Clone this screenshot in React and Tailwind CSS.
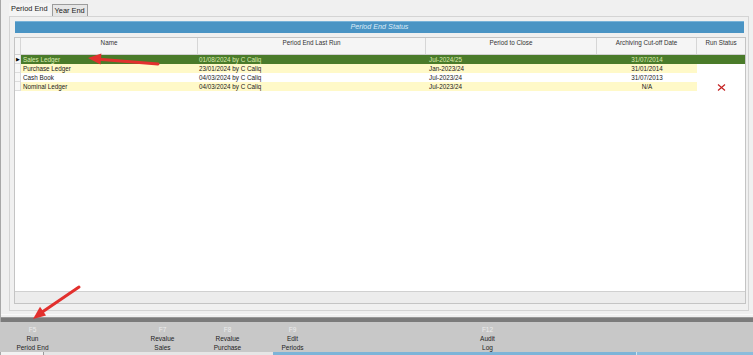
import React from 'react';

const columns = [
  { key: 'ind', label: '' },
  { key: 'name', label: 'Name' },
  { key: 'lastRun', label: 'Period End Last Run' },
  { key: 'toClose', label: 'Period to Close' },
  { key: 'cutoff', label: 'Archiving Cut-off Date' },
  { key: 'status', label: 'Run Status' },
];

const rows = [
  { name: 'Sales Ledger', lastRun: '01/08/2024 by C Caliq', toClose: 'Jul-2024/25', cutoff: '31/07/2014', selected: true },
  { name: 'Purchase Ledger', lastRun: '23/01/2024 by C Caliq', toClose: 'Jan-2023/24', cutoff: '31/01/2014', shaded: true },
  { name: 'Cash Book', lastRun: '04/03/2024 by C Caliq', toClose: 'Jul-2023/24', cutoff: '31/07/2013' },
  { name: 'Nominal Ledger', lastRun: '04/03/2024 by C Caliq', toClose: 'Jul-2023/24', cutoff: 'N/A', shaded: true, failed: true },
];

// function keys, 65px each, empty slots keep the spacing
const keys = [
  { k: 'F5', l1: 'Run', l2: 'Period End' },
  null,
  { k: 'F7', l1: 'Revalue', l2: 'Sales' },
  { k: 'F8', l1: 'Revalue', l2: 'Purchase' },
  { k: 'F9', l1: 'Edit', l2: 'Periods' },
  null,
  null,
  { k: 'F12', l1: 'Audit', l2: 'Log' },
];

const gridCols = 'grid grid-cols-[6px_177px_228px_171px_100px_48px]';

const RedCross = () => (
  <svg width="9" height="7" viewBox="0 0 9 7">
    <path d="M1 0.5 L8 6.5 M8 0.5 L1 6.5" stroke="#c42121" strokeWidth="1.2" fill="none" />
  </svg>
);

const Row = ({ row }) => {
  const bg = row.selected ? 'bg-[#4a7b2a]' : row.shaded ? 'bg-[#fff9c8]' : 'bg-white';
  const txt = row.selected ? 'text-[#dcebb0]' : 'text-[#1a1a1a]';
  return (
    <div className={`${gridCols} h-[9px] leading-[9px] ${txt}`}>
      <div className="bg-[#f7f7f7] border-b border-r border-[#dcdcdc] flex items-center justify-center">
        {row.selected && <span className="text-black text-[5px] leading-none">&#9654;</span>}
      </div>
      <div className={`${bg} pl-[2px]`}>{row.name}</div>
      <div className={`${bg} pl-[1px]`}>{row.lastRun}</div>
      <div className={`${bg} pl-[3px]`}>{row.toClose}</div>
      <div className={`${bg} text-center`}>{row.cutoff}</div>
      <div className={`${row.selected ? 'bg-[#4a7b2a]' : 'bg-white'} flex items-end justify-center`}>
        {row.failed && <RedCross />}
      </div>
    </div>
  );
};

export default function App() {
  return (
    <div className="relative w-[753px] h-[355px] overflow-hidden bg-[#f0f0f0] font-['Liberation_Sans',Arial,sans-serif]">
      <div className="flex flex-col h-full border-l border-[#a8a8a8]">
        {/* Tabs */}
        <div className="h-[16px] flex items-end pl-[8px] text-[7.4px] text-[#1a1a1a]">
          <div className="h-[13px] px-[2px] leading-[12px] bg-[#f4f4f4]">Period End</div>
          <div className="h-[12px] ml-[2px] px-[2px] leading-[11px] bg-[#e6e6e6] border-t border-l border-r border-[#9c9c9c]">Year End</div>
        </div>

        {/* Tab page */}
        <div className="ml-[8px] w-[740px] h-[295px] border border-[#d4d4d4] bg-[#f0f0f0] pt-[4px] pl-[4px]">
          <div className="ml-[1px] w-[729px] h-[12px] bg-[#4a94c4] border-t border-[#78b2d8] flex items-center justify-center text-[7.2px] italic text-[#dcebf7]">
            Period End Status
          </div>

          <div className="mt-[4px] w-[732px] h-[267px] border border-[#c4c4c4] bg-white flex flex-col text-[6.3px]">
            <div className={`${gridCols} h-[17px] border-b border-[#d0d0d0] bg-[#f5f5f5] text-[#333]`}>
              {columns.map((c) => (
                <div key={c.key} className="border-r border-[#d6d6d6] text-center pt-[1px] leading-[8px] last:border-r-0">
                  {c.label}
                </div>
              ))}
            </div>
            {rows.map((r) => (
              <Row key={r.name} row={r} />
            ))}
            <div className="flex-1 bg-white" />
            <div className="h-[12px] border-t border-[#d0d0d0] bg-[#ececec]" />
          </div>
        </div>

        <div className="h-[6px] flex flex-col justify-center">
          <div className="h-px bg-[#fafafa]" />
        </div>

        {/* Divider band */}
        <div className="h-[5px] bg-[#7b7b7b] border-t border-[#9a9a9a]" />

        {/* Function key toolbar */}
        <div className="h-[30px] bg-[#c8c8c8] flex pt-[3px] -ml-[1px] text-[6.5px] leading-[9px]">
          {keys.map((b, i) => (
            <div key={i} className="w-[65px] flex flex-col items-center">
              {b && (
                <>
                  <span className="text-[#ececec]">{b.k}</span>
                  <span className="text-[#1e1e1e]">{b.l1}</span>
                  <span className="text-[#1e1e1e]">{b.l2}</span>
                </>
              )}
            </div>
          ))}
        </div>

        {/* Strip below */}
        <div className="h-[3px] flex">
          <div className="w-[43px] bg-[#f2f2f2] border-r border-[#9a9a9a]" />
          <div className="w-[229px] bg-[#e6e6e6]" />
          <div className="w-[364px] bg-[#7db4d8] border-r border-[#cfe3f0]" />
          <div className="flex-1 bg-[#8bbcdc]" />
        </div>
      </div>

      {/* Annotation arrows */}
      <svg className="absolute inset-0 pointer-events-none" width="753" height="355" viewBox="0 0 753 355">
        <line x1="158" y1="64" x2="99" y2="59.2" stroke="#e2302e" strokeWidth="3" strokeLinecap="round" />
        <polygon points="88,58 101.4,53.6 100.5,64.4" fill="#e2302e" />
        <line x1="79" y1="287" x2="43" y2="311.5" stroke="#e2302e" strokeWidth="3" strokeLinecap="round" />
        <polygon points="33,319 46,315.5 40,306.8" fill="#e2302e" />
      </svg>
    </div>
  );
}
